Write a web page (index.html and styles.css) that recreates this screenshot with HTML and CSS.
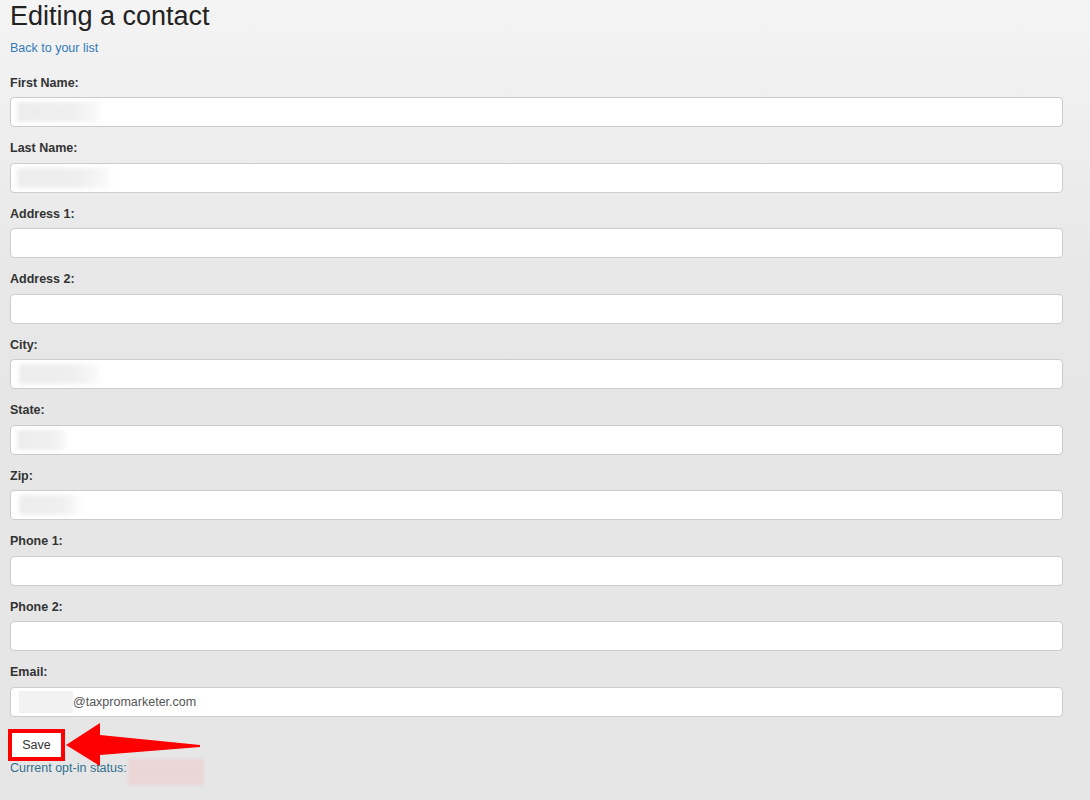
FILE: index.html
```html
<!DOCTYPE html>
<html>
<head>
<meta charset="utf-8">
<link rel="stylesheet" href="styles.css">
</head>
<body>
<div class="page">
  <h1 class="title">Editing a contact</h1>
  <a class="back" href="#">Back to your list</a>
  <form class="form">
    <div class="group"><label class="label">First Name:</label><div class="field"><span class="blur" style="width:83px"></span></div></div>
    <div class="group"><label class="label">Last Name:</label><div class="field"><span class="blur" style="width:93px"></span></div></div>
    <div class="group"><label class="label">Address 1:</label><div class="field"></div></div>
    <div class="group"><label class="label">Address 2:</label><div class="field"></div></div>
    <div class="group"><label class="label">City:</label><div class="field"><span class="blur shift" style="width:80px"></span></div></div>
    <div class="group"><label class="label">State:</label><div class="field"><span class="blur" style="width:50px"></span></div></div>
    <div class="group"><label class="label">Zip:</label><div class="field"><span class="blur shift" style="width:60px"></span></div></div>
    <div class="group"><label class="label">Phone 1:</label><div class="field"></div></div>
    <div class="group"><label class="label">Phone 2:</label><div class="field"></div></div>
    <div class="group"><label class="label">Email:</label><div class="field"><span class="blur solid shift" style="width:54px"></span><span class="value">@taxpromarketer.com</span></div></div>
    <button class="save" type="button">Save</button>
    <p class="status"><span class="status-text">Current opt-in status:</span><span class="status-blur"></span></p>
  </form>
  <svg class="arrow" width="140" height="50" viewBox="60 722 140 50">
    <polygon points="66,745 100,723 100,735 200,745 200,747 100,755 100,766" fill="#ff0000"/>
  </svg>
</div>
</body>
</html>
```
FILE: styles.css
```css
html, body {
  margin: 0;
  padding: 0;
}
body {
  background: linear-gradient(#f4f4f4 0px, #e8e8e8 260px, #e6e6e6 400px) no-repeat;
  background-color: #e6e6e6;
  min-height: 800px;
  font-family: "Liberation Sans", Arial, sans-serif;
  color: #333;
}
.page {
  position: relative;
  padding: 0 27px 0 10px;
}
.title {
  margin: 0;
  font-size: 27px;
  font-weight: normal;
  line-height: 32px;
  color: #222;
}
.back {
  display: block;
  margin-top: 8px;
  font-size: 12.5px;
  line-height: 17px;
  color: #337ab7;
  text-decoration: none;
}
.form {
  margin-top: 17.5px;
}
.group {
  margin-bottom: 13.05px;
}
.label {
  display: block;
  font-size: 12.5px;
  font-weight: bold;
  line-height: 17px;
  margin-bottom: 5.5px;
  color: #333;
}
.field {
  box-sizing: border-box;
  height: 30px;
  background: #fff;
  border: 1px solid #cccccc;
  border-radius: 4px;
  display: flex;
  align-items: center;
  padding-left: 6px;
  overflow: hidden;
}
.blur {
  display: inline-block;
  height: 20px;
  background: linear-gradient(90deg, #ededed 0%, #efefef 70%, #fafafa 100%);
  filter: blur(2px);
}
.blur.shift {
  margin-left: 2px;
}
.blur.solid {
  background: #f2f2f2;
  filter: none;
  height: 22px;
}
.value {
  font-size: 12.5px;
  color: #555;
}
.save {
  display: block;
  box-sizing: border-box;
  width: 57px;
  height: 32px;
  margin: -0.5px 0 0 -2px;
  padding: 0;
  background: #fff;
  border: 4px solid #ff0000;
  border-radius: 0;
  font-family: "Liberation Sans", Arial, sans-serif;
  font-size: 12.5px;
  color: #333;
}
.status {
  margin: -2px 0 0;
  display: flex;
  align-items: flex-start;
}
.status-text {
  font-size: 12.5px;
  line-height: 17px;
  margin-top: 0.5px;
  color: #31708f;
}
.status-blur {
  display: inline-block;
  width: 76px;
  height: 26px;
  margin-left: 1px;
  background: #ebd6d6;
  filter: blur(1.5px);
}
.arrow {
  position: absolute;
  left: 60px;
  top: 722px;
}
```
